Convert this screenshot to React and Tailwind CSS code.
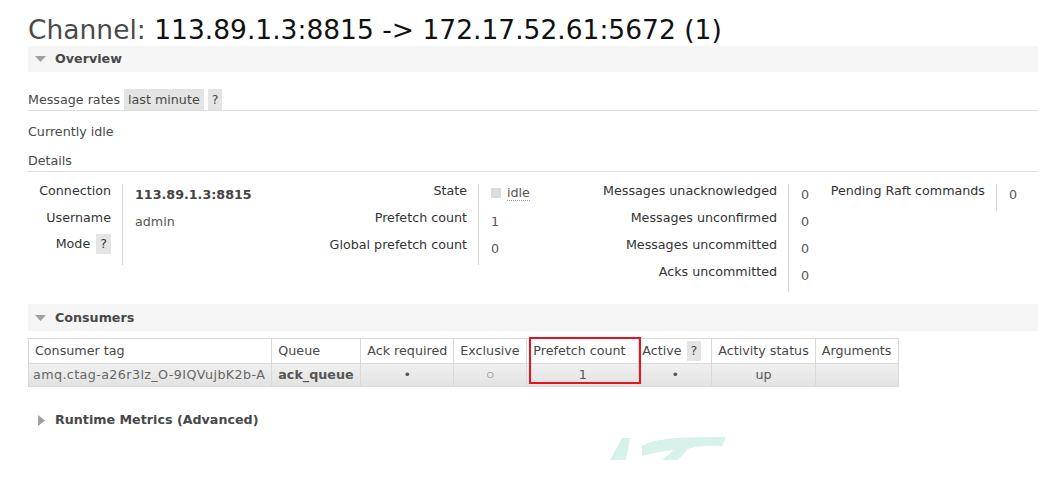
import React from "react";

function Q({ className = "" }) {
  return (
    <span className={`inline-block bg-[#e4e4e4] px-[4px] leading-[20px] ${className}`}>?</span>
  );
}

function SectionBar({ title, open = true, className = "" }) {
  return (
    <div className={`flex h-[26px] items-center bg-[#f5f5f5] pl-[7px] ${className}`}>
      {open ? (
        <svg width="11" height="7" viewBox="0 0 11 7" className="mr-[9px] mt-[1px]">
          <path d="M0 0 L11 0 L5.5 6 Z" fill="#a0a0a0" />
        </svg>
      ) : (
        <svg width="7" height="11" viewBox="0 0 7 11" className="ml-[3px] mr-[10px]">
          <path d="M0 0 L7 5.5 L0 11 Z" fill="#a0a0a0" />
        </svg>
      )}
      <span className="font-bold text-[#484848]">{title}</span>
    </div>
  );
}

function Group({ rows, labelW, valueW, border = true }) {
  return (
    <div className="flex">
      <div style={{ width: labelW }} className="flex flex-col">
        {rows.map((r, i) => (
          <div key={i} className="h-[27px] pr-[11px] text-right leading-[14px] text-[#333]">
            {r[0]}
          </div>
        ))}
      </div>
      <div style={{ width: valueW }} className="flex flex-col">
        {rows.map((r, i) => (
          <div
            key={i}
            className={`h-[27px] pl-[12px] pt-[4px] leading-[14px] text-[#555] ${border ? "border-l border-[#d8d8d8]" : ""}`}
          >
            {r[1]}
          </div>
        ))}
      </div>
    </div>
  );
}

export default function App() {
  const th = "border border-[#d9d9d9] bg-white px-[6px] h-[25px] text-left font-normal text-[#484848] whitespace-nowrap";
  const td = "border border-[#d9d9d9] px-[6px] h-[23px] text-[#555] whitespace-nowrap";
  return (
    <div
      className="relative h-[480px] w-[1057px] overflow-hidden bg-white pl-[28px] pr-[19px] text-[12.7px] text-[#484848]"
      style={{ fontFamily: "'DejaVu Sans', Verdana, sans-serif" }}
    >
      <h1 className="pt-[15px] text-[26.5px] leading-[30px]">
        <span className="text-[#4a4a4a]">Channel: </span>
        <span className="text-[#111]">113.89.1.3:8815 -&gt; 172.17.52.61:5672 (1)</span>
      </h1>

      <SectionBar title="Overview" className="mt-[1px]" />

      <div className="mt-[17px] flex h-[22px] items-center border-b border-[#dedede]">
        <span className="mr-[4px]">Message rates</span>
        <span className="bg-[#e4e4e4] px-[4px] leading-[21px]">last minute</span>
        <Q className="ml-[4px] leading-[21px]" />
      </div>

      <div className="mt-[13px] leading-[16px]">Currently idle</div>

      <div className="mt-[13px] h-[19px] border-b border-[#dedede] leading-[16px]">Details</div>

      <div className="mt-[12px] flex h-[112px]">
        <Group
          labelW={94}
          valueW={200}
          rows={[
            ["Connection", <span className="font-bold text-[#444]">113.89.1.3:8815</span>],
            ["Username", "admin"],
            [
              <span className="relative -top-[4px]">
                Mode <Q className="ml-[2px] leading-[18px]" />
              </span>,
              "",
            ],
          ]}
        />
        <Group
          labelW={156}
          valueW={120}
          rows={[
            [
              "State",
              <span className="relative -top-[3px] flex items-center">
                <span className="mr-[6px] inline-block h-[10px] w-[10px] bg-[#dcdcdc]" />
                <span className="border-b border-dotted border-[#999] leading-[15px]">idle</span>
              </span>,
            ],
            ["Prefetch count", "1"],
            ["Global prefetch count", "0"],
          ]}
        />
        <Group
          labelW={190}
          valueW={37}
          rows={[
            ["Messages unacknowledged", "0"],
            ["Messages unconfirmed", "0"],
            ["Messages uncommitted", "0"],
            ["Acks uncommitted", "0"],
          ]}
        />
        <Group labelW={171} valueW={40} rows={[["Pending Raft commands", "0"]]} />
      </div>

      <SectionBar title="Consumers" className="mt-[8px] h-[27px]" />

      <div className="relative mt-[7px]">
        <table className="border-collapse">
          <thead>
            <tr>
              <th className={`${th} w-[243px]`}>Consumer tag</th>
              <th className={`${th} w-[89px]`}>Queue</th>
              <th className={`${th} w-[93px]`}>Ack required</th>
              <th className={`${th} w-[73px]`}>Exclusive</th>
              <th className={`${th} w-[112px]`}>Prefetch count</th>
              <th className={`${th} w-[73px] pl-[3px]`}>
                Active <Q className="ml-[1px] leading-[19px]" />
              </th>
              <th className={`${th} w-[103px]`}>Activity status</th>
              <th className={`${th} w-[83px]`}>Arguments</th>
            </tr>
          </thead>
          <tbody>
            <tr className="bg-gradient-to-b from-[#f0f0f0] to-[#e2e2e2]">
              <td className={`${td} pl-[4px] text-[#666] tracking-[0.4px]`}>amq.ctag-a26r3lz_O-9IQVujbK2b-A</td>
              <td className={`${td} font-bold text-[#111]`}>ack_queue</td>
              <td className={`${td} text-center`}>•</td>
              <td className={`${td} text-center text-[8px]`}>○</td>
              <td className={`${td} text-center`}>1</td>
              <td className={`${td} text-center`}>•</td>
              <td className={`${td} text-center`}>up</td>
              <td className={td}></td>
            </tr>
          </tbody>
        </table>
        <div className="pointer-events-none absolute left-[501px] top-[-1px] h-[47px] w-[112px] border-2 border-[#e8141c]" />
      </div>

      <div className="mt-[24px] flex h-[18px] items-center pl-[10px]">
        <svg width="7" height="11" viewBox="0 0 7 11" className="mr-[10px]">
          <path d="M0 0 L7 5.5 L0 11 Z" fill="#a0a0a0" />
        </svg>
        <span className="font-bold text-[#484848]">Runtime Metrics (Advanced)</span>
      </div>

      <svg
        className="absolute left-[600px] top-[432px]"
        width="130"
        height="30"
        viewBox="0 0 130 30"
      >
        <path d="M10 28 L22 6 L30 6 L26 28 Z" fill="#d7f1eb" />
        <path
          d="M42 14 C55 6 80 5 126 5 L122 14 C105 13 95 14 88 17 L78 28 L62 28 L74 18 C62 19 50 22 42 24 Z"
          fill="#d7f1eb"
        />
      </svg>
    </div>
  );
}
